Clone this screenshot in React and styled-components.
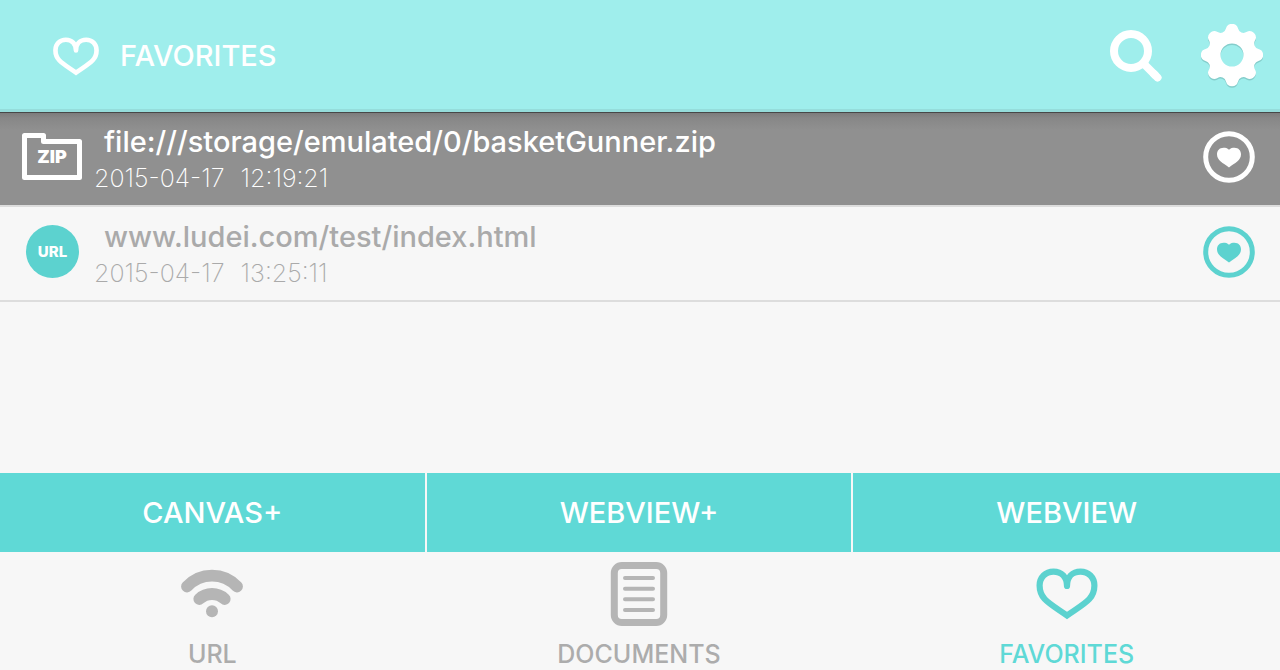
import React from 'react';
import styled, { createGlobalStyle } from 'styled-components';

const GlobalStyle = createGlobalStyle`
  * { box-sizing: border-box; }
  body {
    margin: 0;
    background: #f7f7f7;
    font-family: Inter, "Liberation Sans", sans-serif;
  }
`;

const Page = styled.div`
  min-height: 100vh;
  display: flex;
  flex-direction: column;
`;

const Header = styled.header`
  height: 112px;
  display: flex;
  align-items: center;
  gap: 20px;
  padding: 3px 17px 0 52px;
  color: #fff;
  background: #9feeec;
  border-bottom: 3px solid #95dddb;
`;

const Title = styled.h1`
  flex: 1;
  margin: 0;
  font-size: 29px;
  line-height: 32px;
  font-weight: 500;
`;

const IconButton = styled.button`
  display: flex;
  padding: 0;
  border: 0;
  background: none;
  color: inherit;
  cursor: pointer;
`;

const Actions = styled.div`
  display: flex;
  align-items: center;
  gap: 39px;
`;

const List = styled.ul`
  flex: 1;
  margin: 0;
  padding: 0;
  list-style: none;
`;

const Row = styled.li`
  height: 95px;
  display: flex;
  align-items: center;
  padding: 0 25px 4px 22px;
  border-bottom: 2px solid #dddddd;
  color: ${(p) => (p.$selected ? '#fff' : '#aaaaaa')};
  background: ${(p) =>
    p.$selected
      ? 'linear-gradient(#484848 0, #484848 1px, #7c7c7c 1px, #878787 6px, #909090 18px)'
      : 'transparent'};
`;

const RowIcon = styled.div`
  width: 60px;
  display: flex;
  justify-content: center;
  color: ${(p) => (p.$selected ? '#fff' : '#5cd2cf')};
`;

const RowText = styled.div`
  flex: 1;
  min-width: 0;
  padding: 6px 0 0 12px;
`;

const Address = styled.div`
  padding-left: 10px;
  font-size: 29px;
  line-height: 36px;
  font-weight: 500;
`;

const Stamp = styled.time`
  display: flex;
  gap: 16px;
  font-size: 25px;
  line-height: 36px;
  font-weight: 200;
`;

const FavoriteButton = styled(IconButton)`
  color: ${(p) => (p.$selected ? '#fff' : '#5cd2cf')};
`;

const Launchers = styled.div`
  display: grid;
  grid-template-columns: repeat(3, 1fr);
`;

const LaunchButton = styled.button`
  height: 79px;
  padding: 0;
  border: 0 solid #f7f7f7;
  border-right-width: 2px;
  color: #fff;
  background: #5fd9d6;
  font: 500 29px/32px Inter, "Liberation Sans", sans-serif;
  cursor: pointer;

  &:last-child { border-right-width: 0; }
`;

const Tabs = styled.nav`
  height: 118px;
  display: grid;
  grid-template-columns: repeat(3, 1fr);
`;

const Tab = styled.a`
  display: flex;
  flex-direction: column;
  align-items: center;
  padding-top: 10px;
  border-right: 2px solid transparent;
  text-decoration: none;
  font-size: 25px;
  line-height: 28px;
  font-weight: 500;
  color: ${(p) => (p.$active ? '#5fd9d6' : '#acacac')};

  &:last-child { border-right-width: 0; }
`;

const TabIcon = styled.span`
  height: 64px;
  margin-bottom: 14px;
  display: flex;
  align-items: center;
  color: ${(p) => (p.$active ? '#5cd2cf' : '#b5b5b5')};
`;

const HeartOutline = ({ width, height }) => (
  <svg width={width} height={height} viewBox="0 0 62 52" fill="none" stroke="currentColor"
    strokeWidth="6.2" strokeLinecap="round" aria-hidden="true">
    <path d="M31 18C31 9 25.500 3.600 17.500 3.600C9.500 3.600 3.600 9.500 3.600 17.500C3.600 31 13 35 31 47.500C49 35 58.400 31 58.400 17.500C58.400 9.500 52.500 3.600 44.500 3.600C36.500 3.600 31 9 31 18" />
  </svg>
);

const SearchIcon = () => (
  <svg width="52" height="52" viewBox="0 0 52 52" fill="none" stroke="currentColor" aria-hidden="true">
    <circle cx="21" cy="21" r="17" strokeWidth="8" />
    <path d="M35 35L46 46" strokeWidth="8" />
    <path d="M44 44L47.500 47.500" strokeWidth="8" strokeLinejoin="round" strokeLinecap="round" />
  </svg>
);

// Eight round teeth joined by round valleys; each arc ends where it touches the next.
const TOOTH = { radius: 6.2, distance: 24.8 };
const VALLEY = { radius: 5.7, distance: 30.2 };
const polar = (distance, angle) => [31 + distance * Math.cos(angle), 31 + distance * Math.sin(angle)];
const contact = (toothAngle, valleyAngle) => {
  const [ax, ay] = polar(TOOTH.distance, toothAngle);
  const [bx, by] = polar(VALLEY.distance, valleyAngle);
  const t = TOOTH.radius / (TOOTH.radius + VALLEY.radius);
  return `${(ax + (bx - ax) * t).toFixed(2)} ${(ay + (by - ay) * t).toFixed(2)}`;
};
const gearOutline = Array.from({ length: 8 }, (_, i) => {
  const angle = (i * Math.PI) / 4;
  const half = Math.PI / 8;
  const start = contact(angle, angle - half);
  const end = contact(angle, angle + half);
  const next = contact(angle + 2 * half, angle + half);
  return `${i === 0 ? `M${start}` : ''}A${TOOTH.radius} ${TOOTH.radius} 0 0 1 ${end}A${VALLEY.radius} ${VALLEY.radius} 0 0 0 ${next}`;
}).join('');
const gearPath = `${gearOutline}ZM42.500 31A11.500 11.500 0 1 0 19.500 31A11.500 11.500 0 1 0 42.500 31Z`;

const GearIcon = () => (
  <svg width="62" height="64" viewBox="0 0 62 64" fillRule="evenodd" aria-hidden="true">
    <path d={gearPath} fill="#84cdcb" transform="translate(0 1.500)" />
    <path d={gearPath} fill="currentColor" />
  </svg>
);

const ZipIcon = () => (
  <svg width="60" height="48" viewBox="0 0 60 48" aria-hidden="true">
    <path d="M2.500 2.500H21.500V8.500H57.500V44.500H2.500Z" fill="none" stroke="currentColor" strokeWidth="5" strokeLinejoin="round" />
    <text x="30" y="30" textAnchor="middle" fill="currentColor" fontSize="18" fontWeight="900">ZIP</text>
  </svg>
);

const UrlIcon = () => (
  <svg width="54" height="54" viewBox="0 0 54 54" aria-hidden="true">
    <circle cx="27.500" cy="26.500" r="26.500" fill="currentColor" />
    <text x="27.500" y="31.500" textAnchor="middle" fill="#fff" fontSize="15" fontWeight="800">URL</text>
  </svg>
);

const HeartBadge = () => (
  <svg width="52" height="52" viewBox="0 0 52 52" aria-hidden="true">
    <circle cx="26" cy="26" r="23.300" fill="none" stroke="currentColor" strokeWidth="5" />
    <path d="M26 18.700C24.300 16.800 22.500 16.700 20.500 16.700C16.500 16.700 14 19.500 14 23.300C14 29.500 20 32 26 36.500C32 32 38 29.500 38 23.300C38 19.500 35.500 16.700 31.500 16.700C29.500 16.700 27.700 16.800 26 18.700Z" fill="currentColor" />
  </svg>
);

const SignalIcon = () => (
  <svg width="62" height="50" viewBox="0 0 62 50" fill="none" stroke="currentColor" strokeWidth="11.800" strokeLinecap="round" aria-hidden="true">
    <path d="M6 17.500A34 34 0 0 1 56 17.500" />
    <path d="M18.300 30A18.600 18.600 0 0 1 43.700 30" />
    <circle cx="31" cy="42.300" r="6" fill="currentColor" stroke="none" />
  </svg>
);

const DocumentIcon = () => (
  <svg width="58" height="64" viewBox="0 0 58 64" fill="none" stroke="currentColor" aria-hidden="true">
    <rect x="4.300" y="3.500" width="49.400" height="57" rx="7.500" strokeWidth="7" />
    <path d="M15 16H43M15 26.700H43M15 37.300H43M15 48H43" strokeWidth="4" strokeLinecap="round" />
  </svg>
);

const entries = [
  { address: 'file:///storage/emulated/0/basketGunner.zip', date: '2015-04-17', time: '12:19:21', Icon: ZipIcon, selected: true },
  { address: 'www.ludei.com/test/index.html', date: '2015-04-17', time: '13:25:11', Icon: UrlIcon, selected: false },
];

const tabs = [
  { label: 'URL', icon: <SignalIcon /> },
  { label: 'DOCUMENTS', icon: <DocumentIcon /> },
  { label: 'FAVORITES', icon: <HeartOutline width={62} height={52} />, active: true },
];

export default function App() {
  return (
    <>
      <GlobalStyle />
      <Page>
        <Header>
          <HeartOutline width={48} height={39} />
          <Title>FAVORITES</Title>
          <Actions>
            <IconButton aria-label="Search"><SearchIcon /></IconButton>
            <IconButton aria-label="Settings"><GearIcon /></IconButton>
          </Actions>
        </Header>
        <List>
          {entries.map(({ address, date, time, Icon, selected }) => (
            <Row key={address} $selected={selected}>
              <RowIcon $selected={selected}><Icon /></RowIcon>
              <RowText>
                <Address>{address}</Address>
                <Stamp dateTime={`${date}T${time}`}>
                  <span>{date}</span>
                  <span>{time}</span>
                </Stamp>
              </RowText>
              <FavoriteButton $selected={selected} aria-label="Remove from favorites"><HeartBadge /></FavoriteButton>
            </Row>
          ))}
        </List>
        <Launchers>
          {['CANVAS+', 'WEBVIEW+', 'WEBVIEW'].map((name) => (
            <LaunchButton key={name}>{name}</LaunchButton>
          ))}
        </Launchers>
        <Tabs>
          {tabs.map(({ label, icon, active }) => (
            <Tab key={label} href="#" $active={active}>
              <TabIcon $active={active}>{icon}</TabIcon>
              {label}
            </Tab>
          ))}
        </Tabs>
      </Page>
    </>
  );
}
